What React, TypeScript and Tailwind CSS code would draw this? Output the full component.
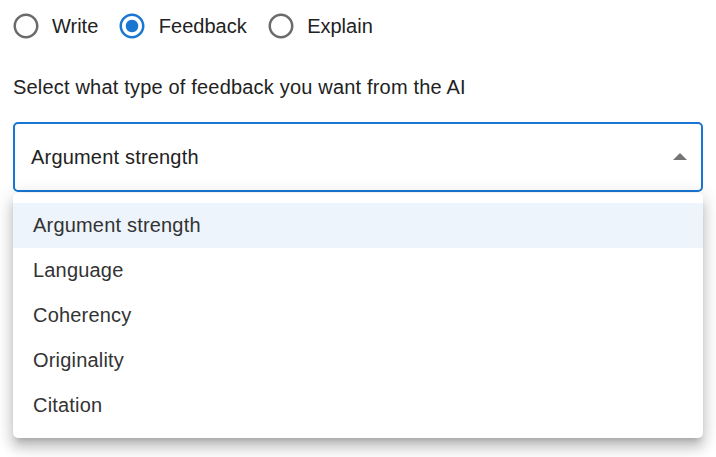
import React from "react";

const RadioIcon = ({ checked }: { checked: boolean }) => (
  <svg width="30" height="30" viewBox="0 0 24 24" className="shrink-0">
    <path
      fill={checked ? "#1976d2" : "#6b6b6b"}
      d="M12 2C6.48 2 2 6.48 2 12s4.48 10 10 10 10-4.48 10-10S17.52 2 12 2zm0 18c-4.42 0-8-3.58-8-8s3.58-8 8-8 8 3.58 8 8-3.58 8-8 8z"
    />
    {checked && <path fill="#1976d2" d="M12 7c-2.76 0-5 2.24-5 5s2.24 5 5 5 5-2.24 5-5-2.24-5-5-5z" />}
  </svg>
);

const options = ["Argument strength", "Language", "Coherency", "Originality", "Citation"];

export default function App() {
  const radios = [
    { label: "Write", checked: false },
    { label: "Feedback", checked: true },
    { label: "Explain", checked: false },
  ];
  return (
    <div
      className="w-[716px] h-[457px] bg-white overflow-hidden text-[20px] tracking-[0.00938em] text-[#222]"
      style={{ fontFamily: '"Liberation Sans", Arial, sans-serif' }}
    >
      <div className="flex items-center h-[30px] mt-[10.5px] pl-[10.5px] gap-[19px] tracking-normal">
        {radios.map((r) => (
          <div key={r.label} className="flex items-center gap-[11.5px]">
            <RadioIcon checked={r.checked} />
            <span className="leading-[30px]">{r.label}</span>
          </div>
        ))}
      </div>
      <div className="pl-[13px] mt-[31px] leading-[30px] text-[#222]">
        Select what type of feedback you want from the AI
      </div>
      <div className="relative ml-[13px] mt-[20px] w-[690px]">
        <div className="h-[70px] border-2 border-[#1976d2] rounded-[5px] flex items-center pl-[16px] pr-[14px] justify-between">
          <span className="text-[#222]">Argument strength</span>
          <svg width="14" height="7" viewBox="0 0 14 7">
            <path d="M0 7 L7 0 L14 7 Z" fill="#757575" />
          </svg>
        </div>
        <div className="absolute left-0 top-[71px] w-[690px] bg-white rounded-[5px] py-[10px] shadow-[0px_6px_6px_-4px_rgba(0,0,0,0.2),0px_10px_12px_1px_rgba(0,0,0,0.14),0px_4px_18px_3px_rgba(0,0,0,0.12)]">
          {options.map((o, i) => (
            <div
              key={o}
              className={`h-[45px] flex items-center pl-[20px] text-[#333] ${i === 0 ? "bg-[#edf4fb]" : ""}`}
            >
              {o}
            </div>
          ))}
        </div>
      </div>
    </div>
  );
}
